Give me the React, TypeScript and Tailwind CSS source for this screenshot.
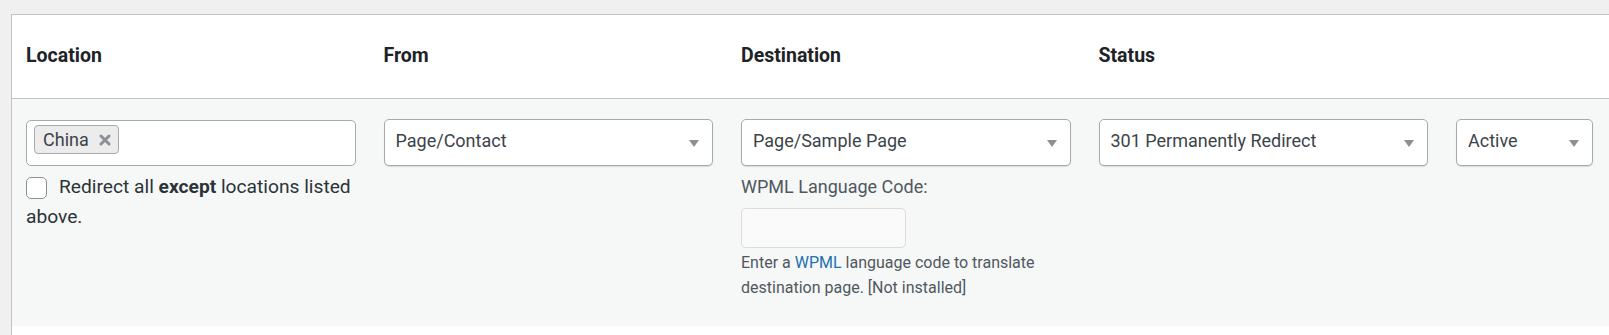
import { ReactNode } from 'react';

const font = { fontFamily: 'Roboto, "Liberation Sans", sans-serif' };

function Arrow() {
  return (
    <svg width="10" height="7" viewBox="0 0 10 7" className="absolute right-[13px] top-[20px]">
      <path d="M0 0 L10 0 L5 7 Z" fill="#8c8f94" />
    </svg>
  );
}

function Select({ label, className = '' }: { label: string; className?: string }) {
  return (
    <div
      className={`relative h-[47px] rounded-[5px] border border-[#a7aaad] bg-white pl-[11px] text-[18px] leading-[41px] text-[#3c434a] shadow-[0_1px_1px_rgba(0,0,0,0.12)] ${className}`}
    >
      {label}
      <Arrow />
    </div>
  );
}

function Cell({ children }: { children?: ReactNode }) {
  return <div className="px-[14px]">{children}</div>;
}

export default function App() {
  return (
    <div className="h-[335px] w-full overflow-hidden bg-[#f0f0f1] pl-[11px] pt-[14px]" style={font}>
      <div className="h-full border-l border-t border-[#c3c4c7] bg-white">
        {/* Header */}
        <div className="grid h-[84px] grid-cols-[357.5px_357.5px_357.5px_357.5px_1fr] items-center border-b border-[#c3c4c7] pb-[2px] text-[19.5px] font-bold text-[#1d2327]">
          <Cell>Location</Cell>
          <Cell>From</Cell>
          <Cell>Destination</Cell>
          <Cell>Status</Cell>
          <Cell />
        </div>

        {/* Row */}
        <div className="grid h-[227px] grid-cols-[357.5px_357.5px_357.5px_357.5px_1fr] items-start bg-[#f6f7f7] pt-[20px]">
          <Cell>
            <div className="mt-[1px] h-[46px] rounded-[5px] border border-[#a7aaad] bg-white pl-[7px] pt-[4px]">
              <span className="inline-flex h-[29px] items-center gap-[10px] rounded-[4px] border border-[#aaaaaa] bg-[#ececec] pl-[8px] pr-[7px] text-[18px] text-[#3c434a]">
                China
                <svg width="12" height="12" viewBox="0 0 12 12">
                  <path d="M2 2 L10 10 M10 2 L2 10" stroke="#8c8f94" strokeWidth="3" strokeLinecap="round" />
                </svg>
              </span>
            </div>
            <p className="mt-[6px] text-[19.2px] leading-[30px] text-[#2c3338]">
              <span className="mr-[12px] inline-block h-[22px] w-[21px] rounded-[5px] border border-[#8c8f94] bg-white align-middle" />
              Redirect all <b className="font-bold">except</b> locations listed above.
            </p>
          </Cell>
          <Cell>
            <Select label="Page/Contact" />
          </Cell>
          <Cell>
            <Select label="Page/Sample Page" />
            <p className="mt-[6px] text-[18px] leading-[30px] text-[#50575e]">WPML Language Code:</p>
            <div className="mt-[6px] h-[40px] w-[165px] rounded-[5px] border border-[#dcdcde] bg-[#fafafa]" />
            <p className="mt-[2px] text-[16px] leading-[25px] text-[#50575e]">
              Enter a <span className="text-[#2271b1]">WPML</span> language code to translate destination page. [Not installed]
            </p>
          </Cell>
          <Cell>
            <Select label="301 Permanently Redirect" />
          </Cell>
          <Cell>
            <Select label="Active" className="w-[137px]" />
          </Cell>
        </div>
      </div>
    </div>
  );
}
